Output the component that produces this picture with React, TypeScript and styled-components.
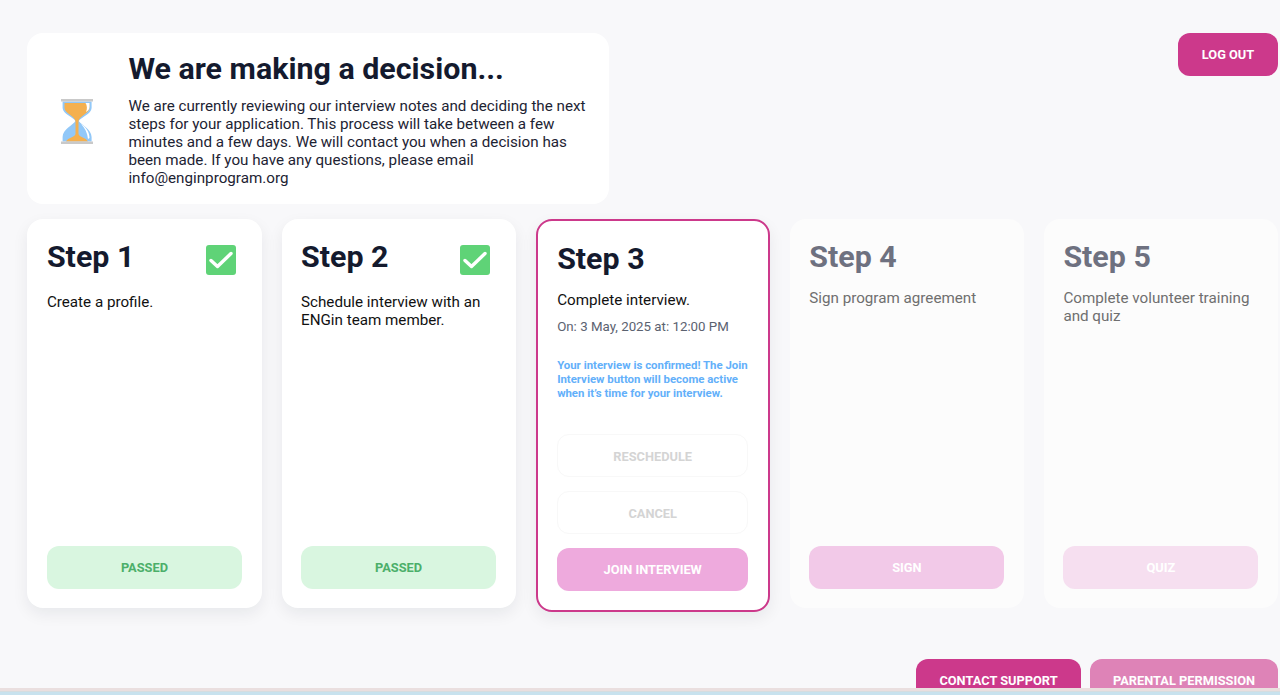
import * as React from 'react';
import styled, { createGlobalStyle } from 'styled-components';

const colors = {
  page: '#f8f8fa',
  ink: '#141a2e',
  pink: '#cc398b',
  muted: '#6e7180',
};

const GlobalStyle = createGlobalStyle`
  html, body {
    margin: 0;
    height: 100%;
    overflow: hidden;
    background: ${colors.page};
    font-family: Roboto, "Liberation Sans", sans-serif;
  }
`;

const Page = styled.div`
  height: 695px;
  box-sizing: border-box;
  padding: 33px 2px 0 27.4px;
  overflow: hidden;
  position: relative;
`;

const TopRow = styled.div`
  display: flex;
  justify-content: space-between;
  align-items: flex-start;
`;

const DecisionCard = styled.div`
  width: 582px;
  height: 171px;
  box-sizing: border-box;
  display: flex;
  align-items: center;
  gap: 35px;
  padding: 0 20px 0 34px;
  background: #fff;
  border-radius: 16px;
`;

const HourglassIcon = styled.svg`
  flex: none;
  width: 32px;
  height: 45px;
  margin-top: 6px;
`;

const DecisionText = styled.div`
  display: flex;
  flex-direction: column;
  margin-top: -2px;
`;

const Heading = styled.h1`
  margin: 0 0 8px;
  font-size: 30.4px;
  line-height: 40px;
  font-weight: 700;
  color: ${colors.ink};
`;

const Body = styled.p`
  margin: 0;
  font-size: 15.2px;
  line-height: 18px;
  color: #1d2333;
`;

const Button = styled.button<{ $tone: string; $ink?: string; $outlined?: boolean }>`
  display: block;
  width: 100%;
  height: 43px;
  padding: ${({ $outlined }) => ($outlined ? '2px 0 0' : '0')};
  border: ${({ $outlined }) => ($outlined ? '1px solid #f8f8f8' : '0')};
  border-radius: 12px;
  background: ${({ $tone }) => $tone};
  color: ${({ $ink }) => $ink ?? '#fff'};
  font-family: inherit;
  font-size: 12.8px;
  font-weight: 700;
  text-transform: uppercase;
`;

const LogOut = styled(Button)`
  width: 100px;
`;

const Steps = styled.div`
  display: grid;
  grid-template-columns: repeat(5, 1fr);
  column-gap: 20px;
  align-items: start;
  margin-top: 15px;
`;

const StepCard = styled.div<{ $active?: boolean; $dim?: boolean }>`
  box-sizing: border-box;
  height: ${({ $active }) => ($active ? 393 : 389)}px;
  padding: 20px 19.5px 19px;
  display: flex;
  flex-direction: column;
  background: ${({ $dim }) => ($dim ? '#fcfcfc' : '#fff')};
  border: ${({ $active }) => ($active ? `2px solid ${colors.pink}` : '0')};
  border-radius: 16px;
  box-shadow: ${({ $dim }) => ($dim ? 'none' : '0 6px 16px rgba(20, 26, 46, 0.07)')};
`;

const StepHeader = styled.div<{ $checked?: boolean }>`
  display: flex;
  justify-content: space-between;
  align-items: flex-start;
  height: ${({ $checked }) => ($checked ? 54 : 50)}px;
`;

const StepTitle = styled.h2<{ $dim?: boolean }>`
  margin: 0;
  font-size: 30.4px;
  line-height: 36px;
  font-weight: 700;
  color: ${({ $dim }) => ($dim ? colors.muted : colors.ink)};
`;

const StepText = styled.p<{ $dim?: boolean }>`
  margin: 0;
  font-size: 15.2px;
  line-height: 18px;
  color: ${({ $dim }) => ($dim ? '#6f6f6f' : '#111')};
`;

const DateLine = styled.p`
  margin: 9px 0 0;
  font-size: 13.3px;
  line-height: 18px;
  color: #5b6270;
`;

const Notice = styled.p`
  margin: 22px 0 0;
  font-size: 11.4px;
  line-height: 14px;
  font-weight: 700;
  color: #63b0fa;
`;

const Actions = styled.div`
  margin-top: auto;
  display: flex;
  flex-direction: column;
`;

const GhostGap = styled.div`
  height: 14px;
`;

const BottomRow = styled.div`
  display: flex;
  justify-content: flex-end;
  gap: 9px;
  margin-top: 47px;
`;

const FooterButton = styled(Button)<{ $w: number }>`
  width: ${({ $w }) => $w}px;
`;

const WindowEdge = styled.div`
  position: absolute;
  left: 0;
  right: 0;
  bottom: 0;
  height: 7px;
  background: linear-gradient(#eadfdf 0 3px, #d5dde0 3px 4px, #c8e2ee 4px);
`;

const CheckSvg = styled.svg`
  flex: none;
  margin: 6px 6px 0 0;
`;

const CheckBadge = () => (
  <CheckSvg width="30" height="30" viewBox="0 0 30 30">
    <rect width="30" height="30" rx="3" fill="#5fd377" />
    <path d="M5 15.5l6.5 6L25 8.5" fill="none" stroke="#fff" strokeWidth="3.4" strokeLinecap="round" strokeLinejoin="round" />
  </CheckSvg>
);

const Hourglass = () => (
  <HourglassIcon viewBox="0 0 32 45">
    <path d="M1.6 2.500H30.600V9C30.600 15 20 18 17.800 22C20 26 30.600 30 30.600 38V42.500H1.600V38C1.600 30 12.500 26 14.400 22C12.500 18 1.600 15 1.600 9Z" fill="#92c8f8" />
    <path d="M3.500 4H28.500V9C28.500 14 18.500 17 17.500 22V35C18 38 25 38.500 27 42.500H5C7 38.500 14 38 14.500 35V22C13.500 17 3.500 14 3.500 9Z" fill="#f4b04f" />
    <path d="M24.500 4H28.500V8C28.500 10 27 12 25 13C26.500 10 26 6 24.500 4ZM20 25C25 28 28.500 33 28.500 39L27 40C26.500 34 24 29 20 25Z" fill="#fff" />
    <rect x="0" y="0" width="32" height="2.500" fill="#c9c9c9" />
    <rect x="0" y="42.500" width="32" height="2.500" fill="#c9c9c9" />
  </HourglassIcon>
);

export default function App() {
  return (
    <Page>
      <GlobalStyle />
      <TopRow>
        <DecisionCard>
          <Hourglass />
          <DecisionText>
            <Heading>We are making a decision...</Heading>
            <Body>
              We are currently reviewing our interview notes and deciding the next steps for your
              application. This process will take between a few minutes and a few days. We will
              contact you when a decision has been made. If you have any questions, please email
              info@enginprogram.org
            </Body>
          </DecisionText>
        </DecisionCard>
        <LogOut $tone={colors.pink}>Log out</LogOut>
      </TopRow>

      <Steps>
        <StepCard>
          <StepHeader $checked>
            <StepTitle>Step 1</StepTitle>
            <CheckBadge />
          </StepHeader>
          <StepText>Create a profile.</StepText>
          <Actions>
            <Button $tone="#d9f6e0" $ink="#4caf6a">Passed</Button>
          </Actions>
        </StepCard>

        <StepCard>
          <StepHeader $checked>
            <StepTitle>Step 2</StepTitle>
            <CheckBadge />
          </StepHeader>
          <StepText>Schedule interview with an ENGin team member.</StepText>
          <Actions>
            <Button $tone="#d9f6e0" $ink="#4caf6a">Passed</Button>
          </Actions>
        </StepCard>

        <StepCard $active>
          <StepHeader>
            <StepTitle>Step 3</StepTitle>
          </StepHeader>
          <StepText>Complete interview.</StepText>
          <DateLine>On: 3 May, 2025 at: 12:00 PM</DateLine>
          <Notice>
            Your interview is confirmed! The Join Interview button will become active when it’s
            time for your interview.
          </Notice>
          <Actions>
            <Button $tone="#fff" $ink="#d4d4d4" $outlined>Reschedule</Button>
            <GhostGap />
            <Button $tone="#fff" $ink="#d4d4d4" $outlined>Cancel</Button>
            <GhostGap />
            <Button $tone="#eeaadd">Join interview</Button>
          </Actions>
        </StepCard>

        <StepCard $dim>
          <StepHeader>
            <StepTitle $dim>Step 4</StepTitle>
          </StepHeader>
          <StepText $dim>Sign program agreement</StepText>
          <Actions>
            <Button $tone="#f2c9e8">Sign</Button>
          </Actions>
        </StepCard>

        <StepCard $dim>
          <StepHeader>
            <StepTitle $dim>Step 5</StepTitle>
          </StepHeader>
          <StepText $dim>Complete volunteer training and quiz</StepText>
          <Actions>
            <Button $tone="#f6dff0">Quiz</Button>
          </Actions>
        </StepCard>
      </Steps>

      <BottomRow>
        <FooterButton $w={165} $tone={colors.pink}>Contact support</FooterButton>
        <FooterButton $w={188} $tone="#de83b7">Parental permission</FooterButton>
      </BottomRow>
      <WindowEdge />
    </Page>
  );
}
